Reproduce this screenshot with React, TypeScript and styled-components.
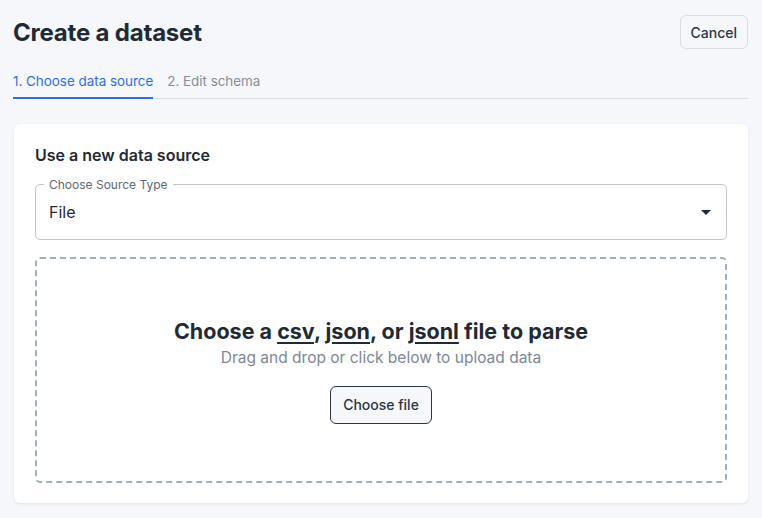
import React from "react";
import styled, { createGlobalStyle } from "styled-components";

const Global = createGlobalStyle`
  html, body { margin: 0; padding: 0; background: #f5f7fa; }
  body { font-family: Inter, "Noto Sans", sans-serif; color: #1f2a37; -webkit-font-smoothing: antialiased; }
  * { box-sizing: border-box; }
`;

const Page = styled.div`
  padding: 15px 14px 15px 13px;
  display: flex;
  flex-direction: column;
`;

const Header = styled.div`
  display: flex;
  align-items: flex-start;
  justify-content: space-between;
`;

const Title = styled.h1`
  margin: 0;
  padding-top: 3px;
  font-size: 24px;
  line-height: 30px;
  font-weight: 700;
  color: #1f2a37;
  letter-spacing: -0.2px;
`;

const Button = styled.button<{ $strong?: boolean }>`
  font-family: inherit;
  font-size: 14px;
  font-weight: 500;
  color: #2a3744;
  background: ${(p) => (p.$strong ? "#f5f7fa" : "transparent")};
  border: 1px solid ${(p) => (p.$strong ? "#2a3744" : "#d9dee4")};
  border-radius: 6px;
  padding: 0 ${(p) => (p.$strong ? "12px" : "10px")};
  height: ${(p) => (p.$strong ? "38px" : "34px")};
  cursor: pointer;
`;

const Tabs = styled.div`
  display: flex;
  gap: 14px;
  margin-top: 16px;
  border-bottom: 1px solid #d8dde3;
`;

const Tab = styled.div<{ $active?: boolean }>`
  font-size: 13.4px;
  line-height: 20px;
  padding: 6px 0 6px;
  margin-bottom: -1px;
  color: ${(p) => (p.$active ? "#2f6fe4" : "#878e97")};
  border-bottom: 2px solid ${(p) => (p.$active ? "#2f6fe4" : "transparent")};
`;

const Card = styled.div`
  margin-top: 25px;
  margin-left: 1px;
  background: #fff;
  border-radius: 6px;
  box-shadow: 0 1px 3px rgba(30, 40, 60, 0.1);
  padding: 21px 21px 20px;
  display: flex;
  flex-direction: column;
`;

const CardTitle = styled.h2`
  margin: 0;
  font-size: 16px;
  line-height: 20px;
  font-weight: 600;
  color: #1f2a37;
`;

const Field = styled.div`
  position: relative;
  margin-top: 19px;
  height: 56px;
  border: 1px solid #c4c4c4;
  border-radius: 5px;
  display: flex;
  align-items: center;
  justify-content: space-between;
  padding: 0 8px 0 13px;
`;

const FieldLabel = styled.span`
  position: absolute;
  top: -8px;
  left: 8px;
  padding: 0 5px;
  background: #fff;
  font-size: 12px;
  line-height: 15px;
  color: #5c6875;
`;

const FieldValue = styled.span`
  font-size: 16px;
  color: #1f2a37;
`;

const Drop = styled.div`
  margin-top: 17px;
  height: 226px;
  border: 2px dashed #9fb0be;
  border-radius: 5px;
  display: flex;
  flex-direction: column;
  align-items: center;
  justify-content: center;
`;

const DropTitle = styled.div`
  font-size: 21.5px;
  line-height: 28px;
  font-weight: 700;
  color: #1f2a37;
`;

const Ext = styled.span`
  text-decoration: underline;
  text-underline-offset: 3px;
  text-decoration-thickness: 2px;
`;

const DropSub = styled.div`
  font-size: 15.5px;
  line-height: 22px;
  color: #7b8896;
  margin-top: 2px;
  margin-bottom: 17px;
`;

export default function App() {
  return (
    <>
      <Global />
      <Page>
        <Header>
          <Title>Create a dataset</Title>
          <Button>Cancel</Button>
        </Header>
        <Tabs>
          <Tab $active>1. Choose data source</Tab>
          <Tab>2. Edit schema</Tab>
        </Tabs>
        <Card>
          <CardTitle>Use a new data source</CardTitle>
          <Field>
            <FieldLabel>Choose Source Type</FieldLabel>
            <FieldValue>File</FieldValue>
            <svg width="24" height="24" viewBox="0 0 24 24">
              <path d="M7 10l5 5 5-5z" fill="#1f2a37" />
            </svg>
          </Field>
          <Drop>
            <DropTitle>
              Choose a <Ext>csv</Ext>, <Ext>json</Ext>, or <Ext>jsonl</Ext> file to parse
            </DropTitle>
            <DropSub>Drag and drop or click below to upload data</DropSub>
            <Button $strong>Choose file</Button>
          </Drop>
        </Card>
      </Page>
    </>
  );
}
